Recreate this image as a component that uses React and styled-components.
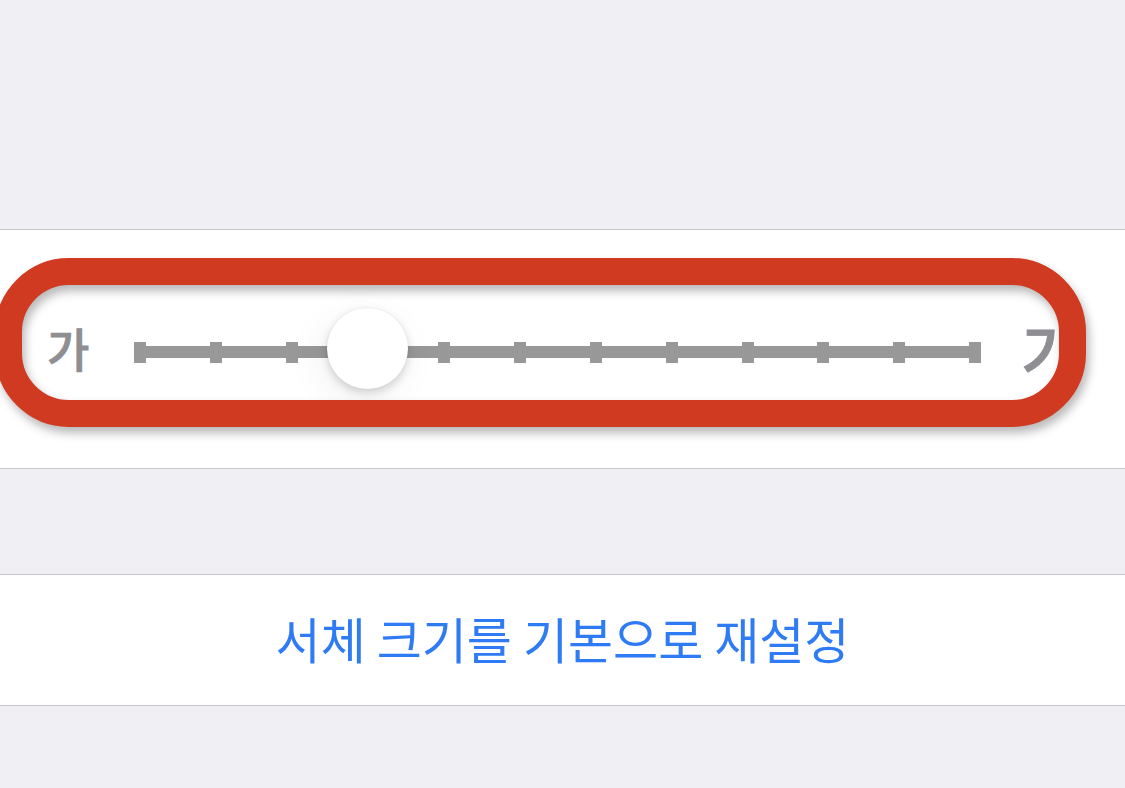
import React from "react";
import styled, { createGlobalStyle } from "styled-components";

const GlobalStyle = createGlobalStyle`
  html, body {
    margin: 0;
    padding: 0;
    background: #efeff4;
  }
  body {
    font-family: "Noto Sans CJK KR", "Noto Sans", sans-serif;
    -webkit-font-smoothing: antialiased;
  }
`;

const Page = styled.div`
  width: 1125px;
  min-height: 788px;
  display: flex;
  flex-direction: column;
  background: #efeff4;
  overflow: hidden;
`;

const Spacer = styled.div`
  height: ${(props) => props.$h}px;
`;

const Group = styled.section`
  position: relative;
  background: #ffffff;
  border-top: 1px solid #c8c7cc;
  border-bottom: 1px solid #c8c7cc;
  height: ${(props) => props.$h}px;
  display: flex;
  align-items: center;
`;

const SliderRow = styled.div`
  display: flex;
  align-items: center;
  width: 100%;
  padding-left: 47px;
  margin-top: 7px;
`;

const SizeLabel = styled.span`
  color: #8e8e93;
  font-size: ${(props) => props.$size}px;
  line-height: 1;
  font-weight: 500;
  -webkit-text-stroke: 0.8px #8e8e93;
  flex: none;
  margin-bottom: ${(props) => props.$raise || 0}px;
`;

const Track = styled.div`
  position: relative;
  flex: none;
  width: 847px;
  height: 21px;
  margin-left: 45px;
  margin-right: 40px;
  display: flex;
  justify-content: space-between;
  align-items: center;

  &::before {
    content: "";
    position: absolute;
    left: 0;
    right: 0;
    top: 4px;
    height: 12px;
    background: #989898;
  }
`;

const Tick = styled.span`
  position: relative;
  width: 12px;
  height: 21px;
  background: #989898;
`;

const Thumb = styled.div`
  position: absolute;
  left: 193px;
  top: -34px;
  width: 81px;
  height: 81px;
  border-radius: 50%;
  background: #ffffff;
  box-shadow: 0 4px 10px rgba(0, 0, 0, 0.16), 0 0 2px rgba(0, 0, 0, 0.08),
    -6px 10px 40px rgba(0, 0, 0, 0.06);
`;

const Highlight = styled.div`
  position: absolute;
  left: -5px;
  top: 28px;
  width: 1091px;
  height: 169px;
  box-sizing: border-box;
  border: 27px solid #d03a21;
  border-radius: 74px;
  filter: drop-shadow(3px 6px 5px rgba(0, 0, 0, 0.28));
  pointer-events: none;
`;

const ResetButton = styled.button`
  width: 100%;
  height: 100%;
  background: none;
  border: none;
  padding: 0 0 5px;
  color: #2f7bf5;
  font-family: "Noto Sans CJK KR", "Noto Sans", sans-serif;
  font-size: 49px;
  font-weight: 400;
  text-align: center;
  cursor: pointer;
`;

const TICKS = 12;

export default function App() {
  return (
    <Page>
      <GlobalStyle />
      <Spacer $h={229} />
      <Group $h={238}>
        <SliderRow>
          <SizeLabel $size={46} $raise={12}>가</SizeLabel>
          <Track>
            {Array.from({ length: TICKS }, (_, i) => (
              <Tick key={i} />
            ))}
            <Thumb />
          </Track>
          <SizeLabel $size={64} $raise={8}>가</SizeLabel>
        </SliderRow>
        <Highlight />
      </Group>
      <Spacer $h={105} />
      <Group $h={130}>
        <ResetButton>서체 크기를 기본으로 재설정</ResetButton>
      </Group>
    </Page>
  );
}
